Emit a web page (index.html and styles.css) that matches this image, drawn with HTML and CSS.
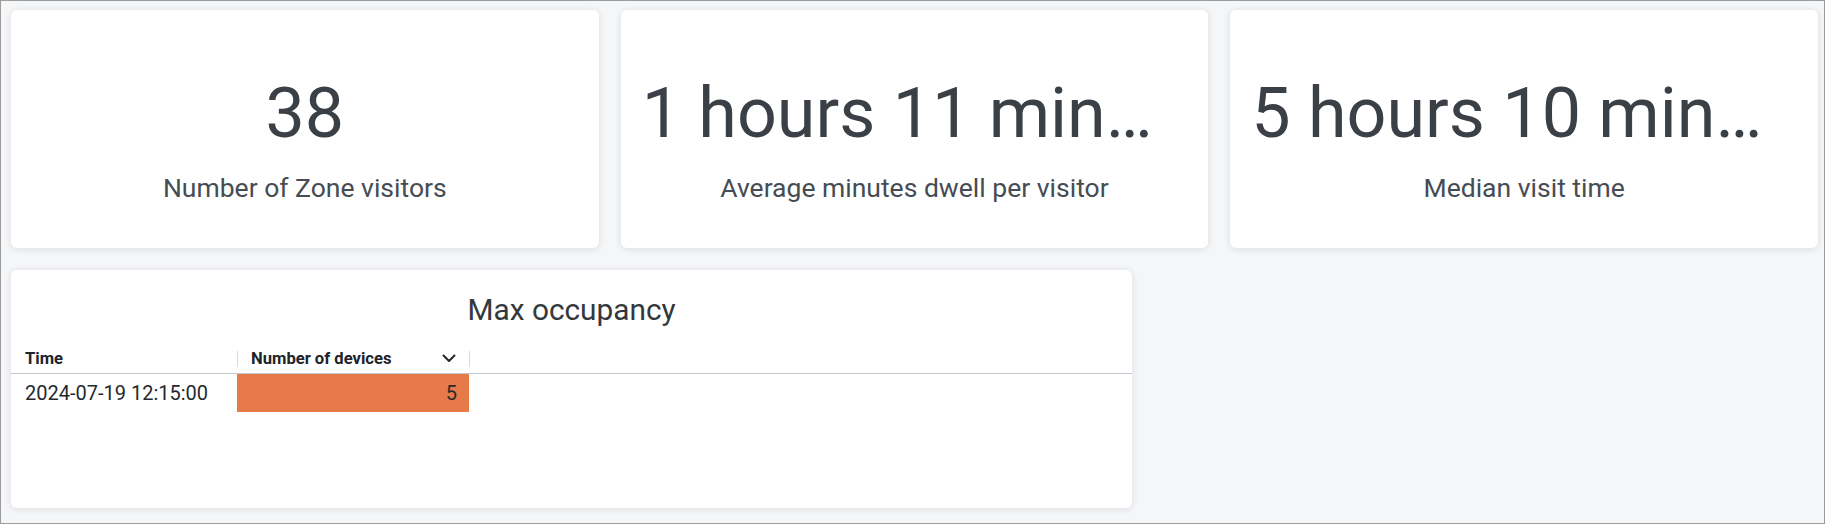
FILE: index.html
```html
<!DOCTYPE html>
<html lang="en">
<head>
<meta charset="utf-8">
<title>Zone dashboard</title>
<link rel="stylesheet" href="styles.css">
</head>
<body>
<div class="frame">
  <div class="grid">
    <section class="card stat s1">
      <div class="stat-value">38</div>
      <div class="stat-title">Number of Zone visitors</div>
    </section>
    <section class="card stat s2">
      <div class="stat-value trunc">1 hours 11 min…</div>
      <div class="stat-title">Average minutes dwell per visitor</div>
    </section>
    <section class="card stat s3">
      <div class="stat-value trunc">5 hours 10 min…</div>
      <div class="stat-title">Median visit time</div>
    </section>
    <section class="card table-card">
      <h2 class="panel-title">Max occupancy</h2>
      <div class="table">
        <div class="thead">
          <div class="th col-time">Time</div>
          <div class="th col-num">
            <span>Number of devices</span>
            <svg class="chev" viewBox="0 0 14 9" width="14" height="9"><path d="M1.5 1.5 L7 7 L12.5 1.5" fill="none" stroke="#24292e" stroke-width="2" stroke-linecap="round" stroke-linejoin="round"/></svg>
          </div>
          <div class="th col-rest"></div>
        </div>
        <div class="tr">
          <div class="td col-time">2024-07-19 12:15:00</div>
          <div class="td col-num cell-orange">5</div>
          <div class="td col-rest"></div>
        </div>
      </div>
    </section>
  </div>
</div>
</body>
</html>
```
FILE: styles.css
```css
html, body {
  margin: 0;
  padding: 0;
}
body {
  font-family: Roboto, "Noto Sans", "Liberation Sans", sans-serif;
  background: #f4f5f7;
}
.frame {
  box-sizing: border-box;
  width: 1825px;
  height: 524px;
  border: 1px solid #9c9c9c;
  padding: 9px 6px 0 10px;
  background: #f5f6f8;
  overflow: hidden;
}
.grid {
  display: grid;
  grid-template-columns: repeat(24, 1fr);
  grid-template-rows: 238px 238px;
  column-gap: 22px;
  row-gap: 22px;
}
.card {
  background: #ffffff;
  border-radius: 6px;
  box-shadow: 0 1px 7px rgba(30, 35, 45, 0.12);
}
.s1 { grid-column: 1 / span 8; }
.s2 { grid-column: 9 / span 8; }
.s3 { grid-column: 17 / span 8; }
.table-card { grid-column: 1 / span 15; grid-row: 2; }

.stat {
  box-sizing: border-box;
  display: flex;
  flex-direction: column;
  align-items: center;
  padding: 57px 21px 0;
}
.stat-value {
  font-size: 70px;
  line-height: 92px;
  color: #3a4046;
  white-space: nowrap;
}
.stat-value.trunc {
  align-self: stretch;
  text-align: left;
  overflow: hidden;
}
.stat-title {
  margin-top: 14px;
  font-size: 26.5px;
  line-height: 30px;
  color: #464c54;
}

.panel-title {
  margin: 0;
  padding-top: 22px;
  height: 44px;
  text-align: center;
  font-weight: 400;
  font-size: 29.8px;
  line-height: 36px;
  color: #33383d;
}
.table {
  margin-top: 8px;
}
.thead, .tr {
  display: flex;
}
.thead {
  height: 29px;
  border-bottom: 1px solid #c2c8ce;
  align-items: center;
}
.th {
  box-sizing: border-box;
  font-size: 16.6px;
  font-weight: 700;
  color: #202328;
  height: 16px;
  line-height: 16px;
  display: flex;
  align-items: center;
}
.col-time {
  width: 226px;
  box-sizing: border-box;
  padding-left: 14px;
}
.col-num {
  width: 232px;
  box-sizing: border-box;
  padding-left: 13px;
  padding-right: 13px;
}
.col-rest { flex: 1; }
.th.col-num, .th.col-rest {
  border-left: 1px solid #d6d9dd;
}
.th.col-rest { flex: 0 0 auto; width: 0; }
.chev {
  margin-left: auto;
}
.tr {
  height: 38px;
}
.td {
  box-sizing: border-box;
  font-size: 20px;
  line-height: 38px;
  color: #24292e;
}
.cell-orange {
  background: #e67a48;
  text-align: right;
  padding-right: 12px;
  color: #2a2a2a;
}
```
